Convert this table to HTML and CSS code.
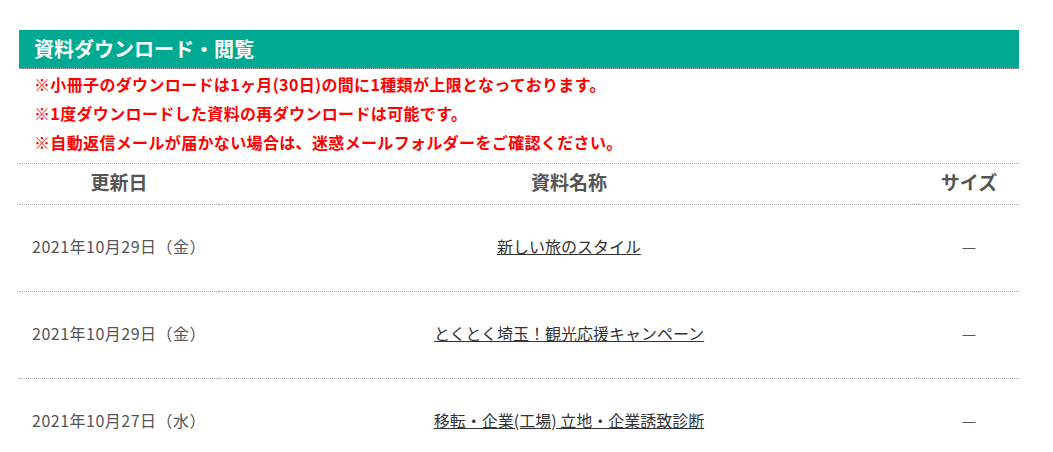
FILE: index.html
```html
<!DOCTYPE html>
<html lang="ja">
<head>
<meta charset="utf-8">
<link rel="stylesheet" href="styles.css">
</head>
<body>
<section class="panel">
  <h2 class="panel-title">資料ダウンロード・閲覧</h2>
  <div class="notes">
    <p>※小冊子のダウンロードは1ヶ月(30日)の間に1種類が上限となっております。</p>
    <p>※1度ダウンロードした資料の再ダウンロードは可能です。</p>
    <p>※自動返信メールが届かない場合は、迷惑メールフォルダーをご確認ください。</p>
  </div>
  <table class="docs">
    <thead>
      <tr>
        <th class="col-date">更新日</th>
        <th class="col-name">資料名称</th>
        <th class="col-size">サイズ</th>
      </tr>
    </thead>
    <tbody>
      <tr>
        <td class="date">2021年10月29日（金）</td>
        <td class="name"><a href="#">新しい旅のスタイル</a></td>
        <td class="size">—</td>
      </tr>
      <tr>
        <td class="date">2021年10月29日（金）</td>
        <td class="name"><a href="#">とくとく埼玉！観光応援キャンペーン</a></td>
        <td class="size">—</td>
      </tr>
      <tr>
        <td class="date">2021年10月27日（水）</td>
        <td class="name"><a href="#">移転・企業(工場) 立地・企業誘致診断</a></td>
        <td class="size">—</td>
      </tr>
    </tbody>
  </table>
</section>
</body>
</html>
```

FILE: styles.css
```css
html, body {
  margin: 0;
  padding: 0;
  background: #fff;
}
body {
  font-family: "Noto Sans CJK JP", "Noto Sans", sans-serif;
  color: #555;
}
.panel {
  width: 1000px;
  margin: 30px 0 0 19px;
}
.panel-title {
  margin: 0;
  height: 38px;
  line-height: 37px;
  padding-left: 15px;
  background: #00aa92;
  color: #fff;
  font-size: 20px;
  font-weight: bold;
  border-bottom: 1px dotted #aaa;
}
.notes {
  padding: 1px 0 6px 15px;
  border-bottom: 1px dotted #aaa;
}
.notes p {
  margin: 0;
  color: #f00;
  font-size: 16px;
  font-weight: bold;
  line-height: 29px;
  letter-spacing: 0.35px;
}
.docs {
  width: 100%;
  border-collapse: collapse;
  table-layout: fixed;
}
.docs th {
  height: 35px;
  padding: 0 0 5px;
  font-size: 19px;
  font-weight: bold;
  color: #555;
  text-align: center;
  vertical-align: middle;
  border-bottom: 1px dotted #aaa;
}
.col-date { width: 20%; }
.col-name { width: 70%; }
.col-size { width: 10%; }
.docs td {
  height: 81px;
  padding: 0 0 5px;
  font-size: 16px;
  vertical-align: middle;
  border-bottom: 1px dotted #aaa;
}
.docs td.date {
  padding-left: 13px;
  color: #555;
  letter-spacing: 0.5px;
}
.docs td.name {
  text-align: center;
}
.docs td.name a {
  color: #333;
  text-decoration: underline;
}
.docs td.size {
  text-align: center;
  color: #555;
}
```
